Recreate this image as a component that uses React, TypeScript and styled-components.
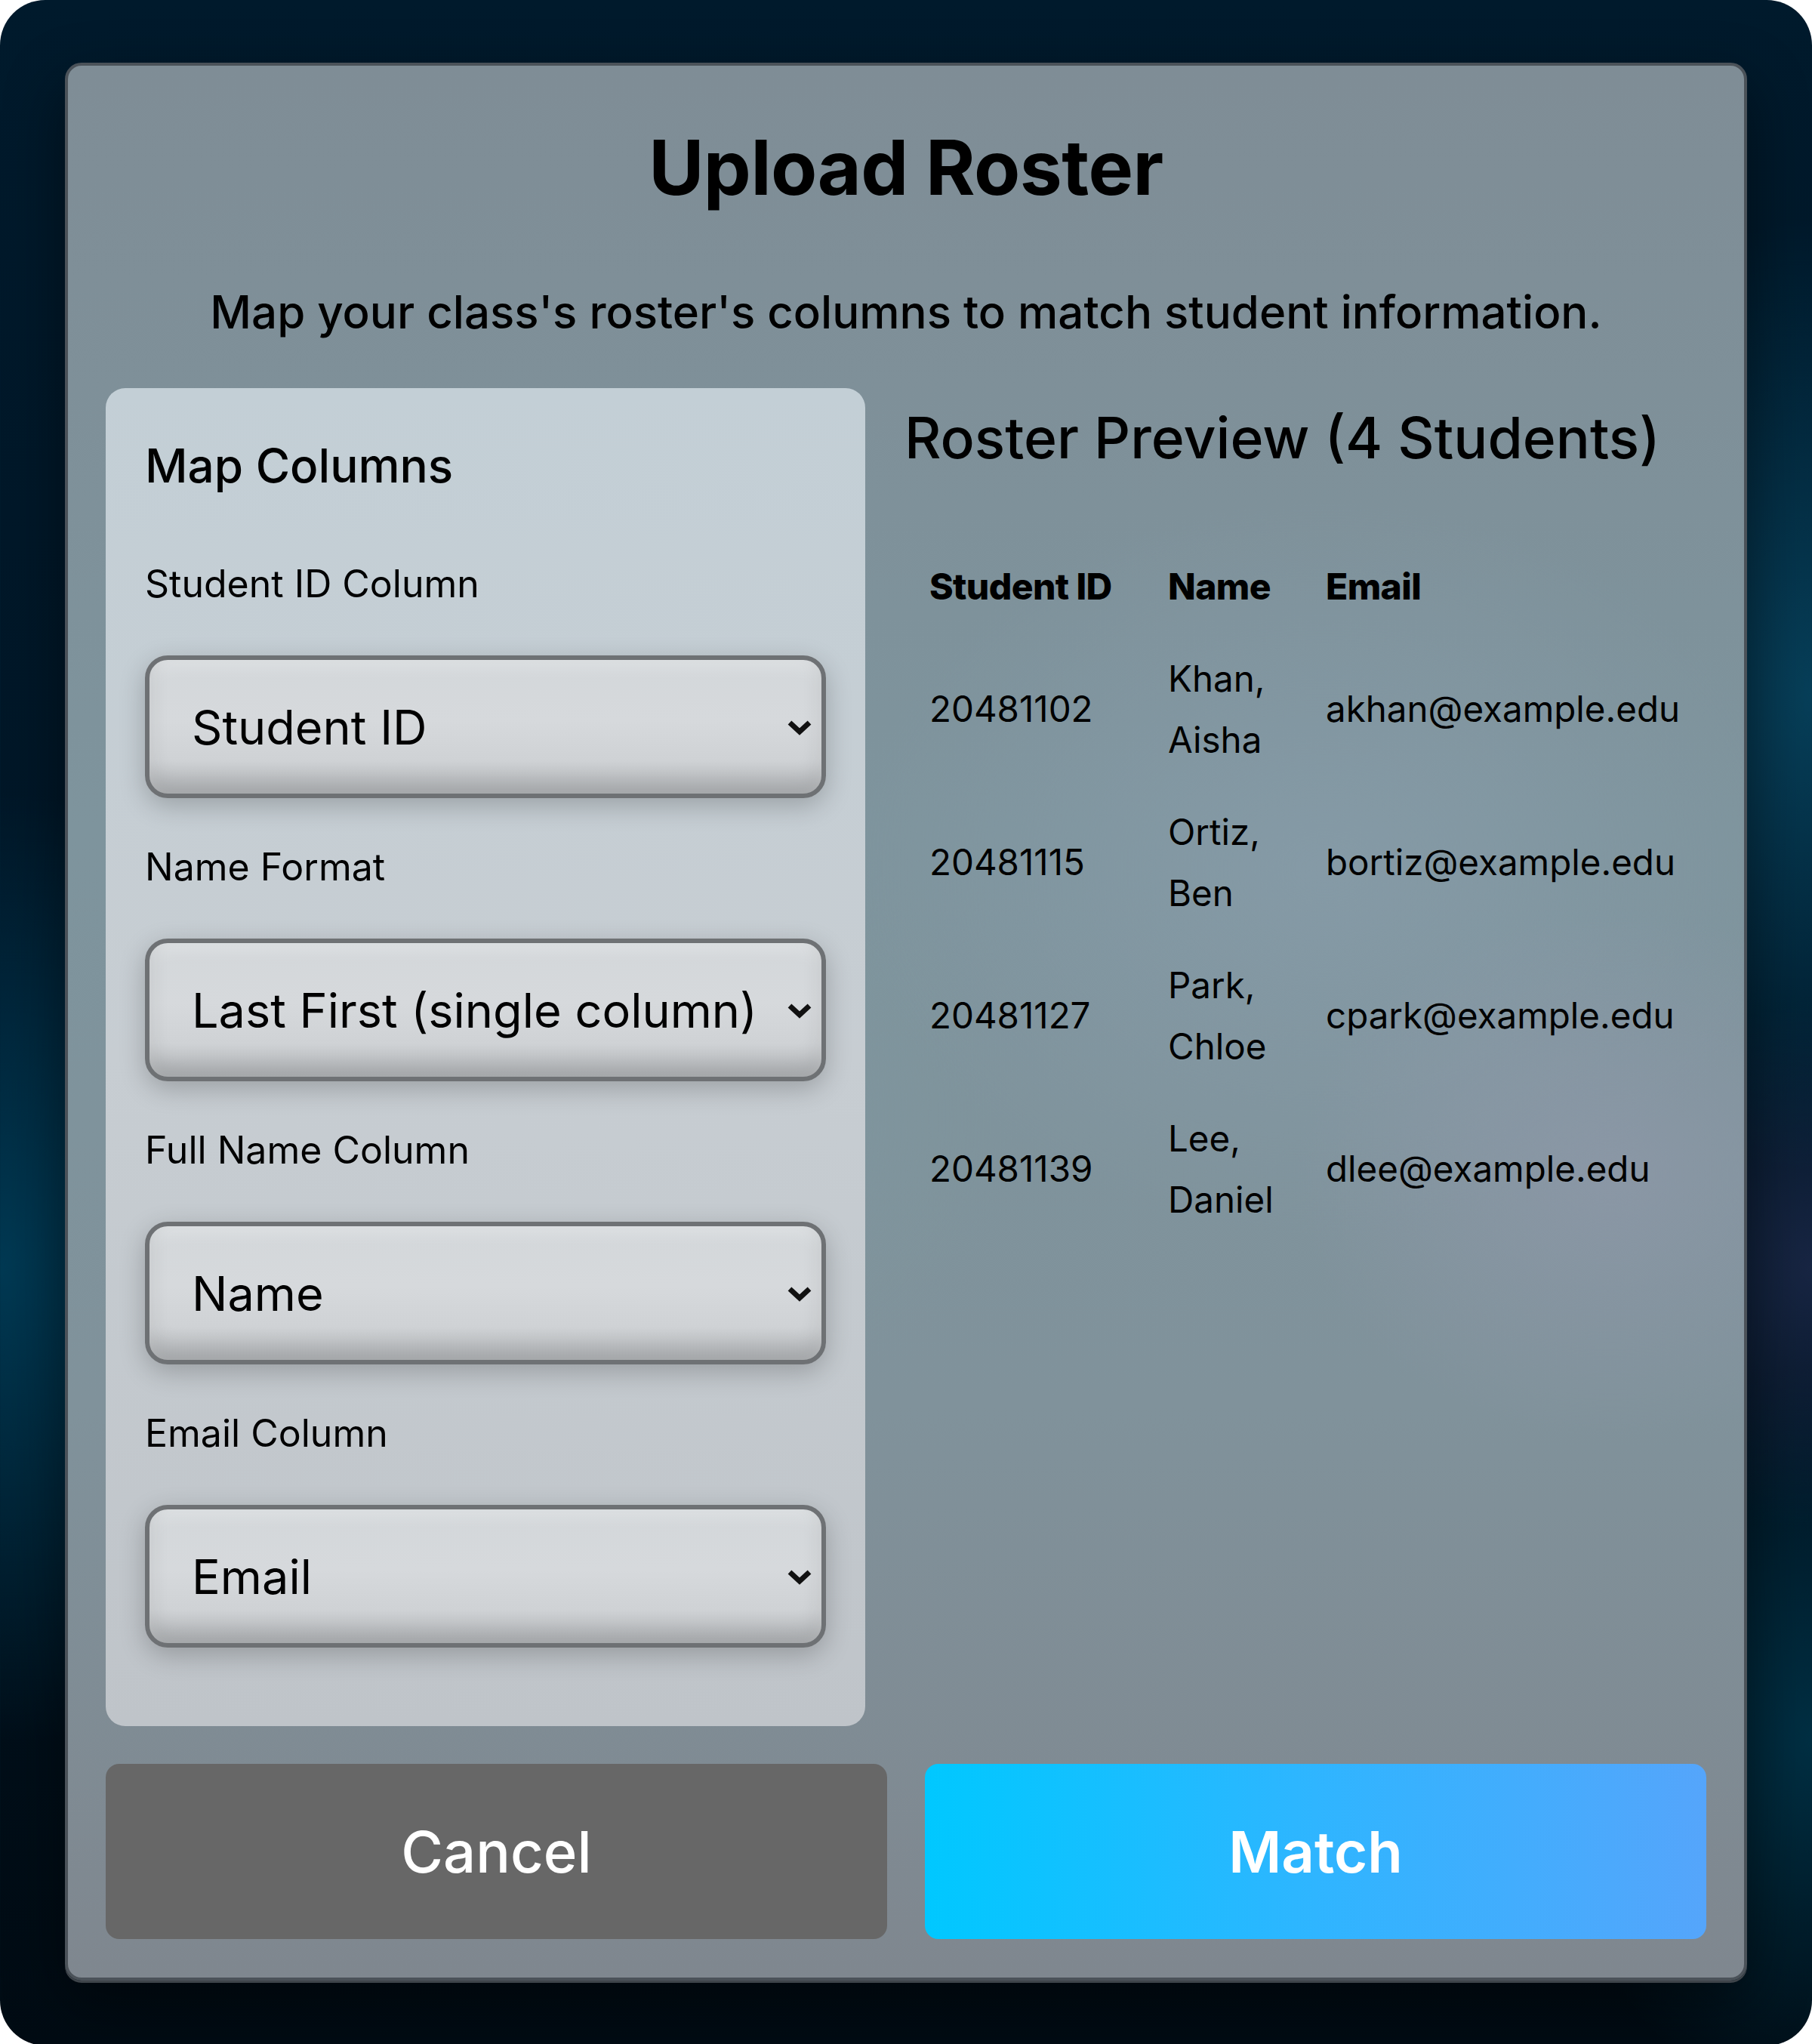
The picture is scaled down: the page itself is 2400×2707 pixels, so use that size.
import React from "react";
import styled, { createGlobalStyle } from "styled-components";

const GlobalStyle = createGlobalStyle`
  html, body {
    margin: 0;
    padding: 0;
    background: #ffffff;
  }
  body {
    font-family: Inter, "Noto Sans", "Liberation Sans", sans-serif;
    color: #000;
  }
  * {
    box-sizing: border-box;
  }
`;

const Screen = styled.div`
  width: 2400px;
  min-height: 2707px;
  padding: 83px 86px 86px;
  border-radius: 60px;
  overflow: hidden;
  background:
    radial-gradient(ellipse 700px 900px at 0% 62%, rgba(0, 70, 100, 0.75), transparent 70%),
    radial-gradient(ellipse 600px 900px at 100% 34%, rgba(10, 80, 110, 0.7), transparent 70%),
    radial-gradient(ellipse 400px 500px at 100% 62%, rgba(40, 50, 90, 0.6), transparent 70%),
    radial-gradient(ellipse 500px 700px at 100% 85%, rgba(0, 65, 90, 0.65), transparent 70%),
    linear-gradient(180deg, #001a2c 0%, #001626 50%, #000b13 100%);
`;

const Modal = styled.section`
  display: flex;
  flex-direction: column;
  min-height: 2538px;
  padding: 75px 50px 51px;
  border: 4px solid #4b5259;
  border-radius: 22px;
  background:
    radial-gradient(ellipse 600px 500px at 92% 58%, rgba(150, 155, 175, 0.5), transparent 70%),
    radial-gradient(ellipse 900px 700px at 75% 42%, rgba(140, 160, 175, 0.5), transparent 70%),
    radial-gradient(ellipse 700px 600px at 35% 55%, rgba(125, 155, 160, 0.4), transparent 70%),
    linear-gradient(180deg, #7f8d96 0%, #7e949d 40%, #80929b 70%, #7f878f 100%);
  box-shadow: 0 3px 0 #3e444a, 0 30px 80px rgba(0, 0, 0, 0.45);
`;

const Title = styled.h1`
  margin: 0;
  font-size: 100px;
  line-height: 1.2;
  font-weight: 700;
  text-align: center;
  letter-spacing: -0.5px;
`;

const Subtitle = styled.p`
  margin: 95px 0 65px;
  font-size: 60px;
  line-height: 1.2;
  font-weight: 500;
  text-align: center;
`;

const Body = styled.div`
  display: grid;
  grid-template-columns: 1006px 1fr;
  column-gap: 52px;
  align-items: start;
`;

const MapPanel = styled.div`
  padding: 66px 52px 104px;
  border-radius: 26px;
  background: linear-gradient(180deg, #c3cfd6 0%, #c7cdd2 50%, #bfc4c9 100%);
`;

const PanelHeading = styled.h2`
  margin: 0 0 89px;
  font-size: 62px;
  line-height: 1.2;
  font-weight: 500;
`;

const Field = styled.div`
  display: flex;
  flex-direction: column;
  & + & {
    margin-top: 61px;
  }
`;

const Label = styled.label`
  font-size: 50px;
  line-height: 1.2;
  font-weight: 400;
  margin-bottom: 65px;
`;

const SelectWrap = styled.div`
  position: relative;
  height: 189px;
  border: 6px solid #6e7174;
  border-radius: 30px;
  background: linear-gradient(180deg, #d3d7da 0%, #d6d9dc 45%, #cfd2d5 75%, #b8bbbe 100%);
  box-shadow:
    inset 0 -18px 26px rgba(0, 0, 0, 0.12),
    inset 0 10px 20px rgba(255, 255, 255, 0.25),
    0 10px 34px rgba(0, 0, 0, 0.22);
`;

const Select = styled.select`
  appearance: none;
  width: 100%;
  height: 100%;
  padding: 0 80px 0 56px;
  border: none;
  background: transparent;
  font-family: Inter, "Noto Sans", "Liberation Sans", sans-serif;
  font-size: 63px;
  color: #000;
  outline: none;
`;

const Chevron = styled.svg`
  position: absolute;
  right: 12px;
  top: 50%;
  width: 34px;
  height: 22px;
  transform: translateY(-50%);
  pointer-events: none;
`;

const Preview = styled.div`
  display: flex;
  flex-direction: column;
`;

const PreviewHeading = styled.h2`
  margin: 21px 0 91px;
  font-size: 75px;
  line-height: 1.2;
  font-weight: 500;
`;

const Table = styled.table`
  width: 100%;
  border-collapse: collapse;
  table-layout: fixed;
  font-size: 47.5px;
  line-height: 81.5px;
`;

const HeadCell = styled.th`
  padding: 20px 33px;
  text-align: left;
  font-size: 48px;
  font-weight: 800;
  letter-spacing: -0.6px;
  white-space: nowrap;
`;

const Cell = styled.td`
  padding: 20px 33px;
  text-align: left;
  vertical-align: middle;
`;

const Actions = styled.div`
  display: grid;
  grid-template-columns: 1fr 1fr;
  column-gap: 50px;
  margin-top: 50px;
`;

const Button = styled.button<{ $primary?: boolean }>`
  height: 232px;
  border: none;
  border-radius: 18px;
  font-family: Inter, "Noto Sans", "Liberation Sans", sans-serif;
  font-size: 76px;
  font-weight: ${(p) => (p.$primary ? 600 : 500)};
  color: #fff;
  background: ${(p) =>
    p.$primary ? "linear-gradient(90deg, #00c8ff 0%, #2fb5ff 50%, #55a5fb 100%)" : "#676767"};
  cursor: pointer;
`;

const fields = [
  { label: "Student ID Column", value: "Student ID" },
  { label: "Name Format", value: "Last First (single column)" },
  { label: "Full Name Column", value: "Name" },
  { label: "Email Column", value: "Email" },
];

const students = [
  { id: "20481102", name: "Khan, Aisha", email: "akhan@example.edu" },
  { id: "20481115", name: "Ortiz, Ben", email: "bortiz@example.edu" },
  { id: "20481127", name: "Park, Chloe", email: "cpark@example.edu" },
  { id: "20481139", name: "Lee, Daniel", email: "dlee@example.edu" },
];

const App: React.FC = () => {
  return (
    <>
      <GlobalStyle />
      <Screen>
        <Modal>
          <Title>Upload Roster</Title>
          <Subtitle>Map your class's roster's columns to match student information.</Subtitle>
          <Body>
            <MapPanel>
              <PanelHeading>Map Columns</PanelHeading>
              {fields.map((f) => (
                <Field key={f.label}>
                  <Label>{f.label}</Label>
                  <SelectWrap>
                    <Select defaultValue={f.value}>
                      <option>{f.value}</option>
                    </Select>
                    <Chevron viewBox="0 0 34 22">
                      <path d="M4 5 L17 17 L30 5" fill="none" stroke="#111" strokeWidth="7" />
                    </Chevron>
                  </SelectWrap>
                </Field>
              ))}
            </MapPanel>
            <Preview>
              <PreviewHeading>Roster Preview (4 Students)</PreviewHeading>
              <Table>
                <colgroup>
                  <col style={{ width: 316 }} />
                  <col style={{ width: 209 }} />
                  <col />
                </colgroup>
                <thead>
                  <tr>
                    <HeadCell>Student ID</HeadCell>
                    <HeadCell>Name</HeadCell>
                    <HeadCell>Email</HeadCell>
                  </tr>
                </thead>
                <tbody>
                  {students.map((s) => (
                    <tr key={s.id}>
                      <Cell>{s.id}</Cell>
                      <Cell>{s.name}</Cell>
                      <Cell>{s.email}</Cell>
                    </tr>
                  ))}
                </tbody>
              </Table>
            </Preview>
          </Body>
          <Actions>
            <Button>Cancel</Button>
            <Button $primary>Match</Button>
          </Actions>
        </Modal>
      </Screen>
    </>
  );
};

export default App;
